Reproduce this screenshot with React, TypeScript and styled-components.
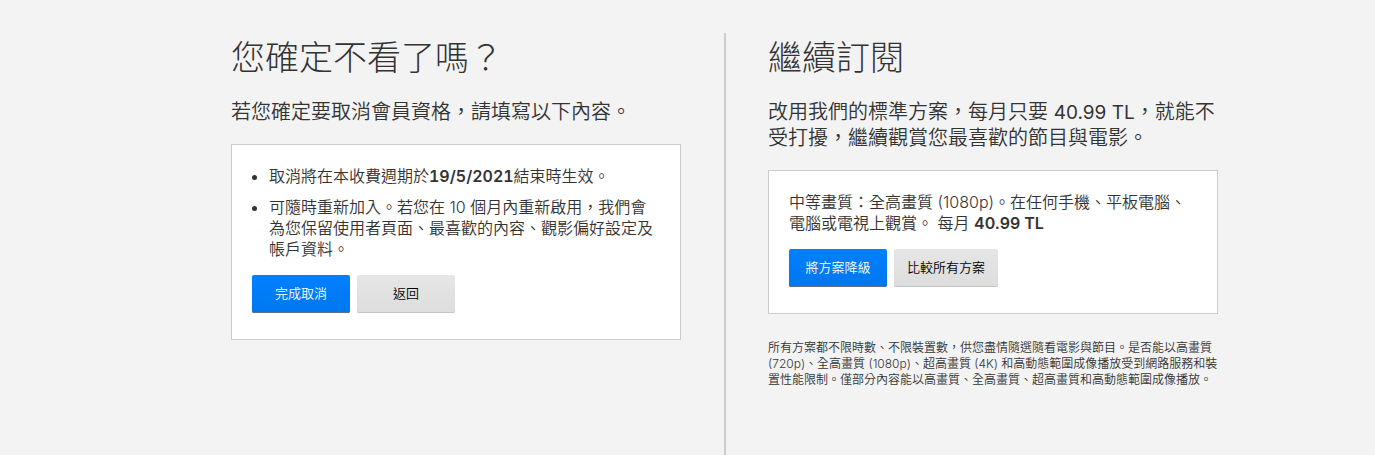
import React from "react";
import styled, { createGlobalStyle } from "styled-components";

const GlobalStyle = createGlobalStyle`
  * {
    box-sizing: border-box;
  }

  body {
    margin: 0;
    background: #f3f3f3;
    color: #333;
    font-family: Inter, "Noto Sans CJK TC DemiLight", "Noto Sans CJK TC", sans-serif;
    font-size: 16px;
    font-weight: 300;
    line-height: 21px;
  }
`;

const Page = styled.main`
  display: flex;
  min-height: 100vh;
  padding: 33px 157px 0 231px;
`;

const Column = styled.section`
  flex: 1 1 0;
  min-width: 0;
`;

const Divider = styled.div`
  flex: none;
  width: 2px;
  margin: 0 42px 0 43px;
  background: #ccc;
`;

const Title = styled.h1`
  margin: 0 0 16px;
  font-family: Inter, "Noto Sans CJK TC", sans-serif;
  font-size: 34px;
  font-weight: 300;
  line-height: 50px;
`;

const Lead = styled.p`
  margin: 0 0 19px;
  font-size: 20px;
  line-height: 26px;
`;

const Price = styled.span`
  font-size: 19px;
  font-weight: 400;
  line-height: 20px;
`;

const Panel = styled.div`
  padding: 21px 20px 26px;
  border: 1px solid #ccc;
  background: #fff;
`;

const Terms = styled.ul`
  margin: 0;
  padding-left: 17px;
`;

const Term = styled.li`
  & + & {
    margin-top: 10px;
  }
`;

const Text = styled.p`
  margin: 0;
`;

const Strong = styled.strong`
  font-weight: 600;
`;

const DateText = styled(Strong)`
  font-variant-numeric: tabular-nums;
`;

const Actions = styled.div`
  display: flex;
  gap: 7px;
  margin-top: 15px;
`;

const Button = styled.button<{ $primary?: boolean }>`
  min-width: 98px;
  height: 38px;
  padding: 0 13px 2px;
  border: 0;
  border-radius: 2px;
  background: ${(p) =>
    p.$primary
      ? "linear-gradient(to bottom, #0080ff, #0077ee)"
      : "linear-gradient(to bottom, #e6e6e6, #dddddd)"};
  box-shadow: inset 0 -1px 0 ${(p) => (p.$primary ? "#5c6f85" : "#c4c4c4")};
  color: ${(p) => (p.$primary ? "#fff" : "#000")};
  font-family: inherit;
  font-size: 13px;
  font-weight: 400;
  line-height: 20px;
  white-space: nowrap;
  cursor: pointer;
`;

const FinePrint = styled.p`
  margin: 26px 0 0;
  font-size: 12px;
  line-height: 16px;
`;

export default function App() {
  return (
    <>
      <GlobalStyle />
      <Page lang="zh-Hant">
        <Column>
          <Title>您確定不看了嗎？</Title>
          <Lead>若您確定要取消會員資格，請填寫以下內容。</Lead>
          <Panel>
            <Terms>
              <Term>
                取消將在本收費週期於<DateText>19/5/2021</DateText>結束時生效。
              </Term>
              <Term>
                可隨時重新加入。若您在 10 個月內重新啟用，我們會為您保留使用者頁面、最喜歡的內容、觀影偏好設定及帳戶資料。
              </Term>
            </Terms>
            <Actions>
              <Button type="button" $primary>完成取消</Button>
              <Button type="button">返回</Button>
            </Actions>
          </Panel>
        </Column>
        <Divider />
        <Column>
          <Title as="h2">繼續訂閱</Title>
          <Lead>
            改用我們的標準方案，每月只要 <Price>40.99 TL</Price>，就能不受打擾，繼續觀賞您最喜歡的節目與電影。
          </Lead>
          <Panel>
            <Text>
              中等畫質：全高畫質 (1080p)。在任何手機、平板電腦、電腦或電視上觀賞。 每月 <Strong>40.99 TL</Strong>
            </Text>
            <Actions>
              <Button type="button" $primary>將方案降級</Button>
              <Button type="button">比較所有方案</Button>
            </Actions>
          </Panel>
          <FinePrint>
            所有方案都不限時數、不限裝置數，供您盡情隨選隨看電影與節目。是否能以高畫質 (720p)、全高畫質 (1080p)、超高畫質 (4K) 和高動態範圍成像播放受到網路服務和裝置性能限制。僅部分內容能以高畫質、全高畫質、超高畫質和高動態範圍成像播放。
          </FinePrint>
        </Column>
      </Page>
    </>
  );
}
